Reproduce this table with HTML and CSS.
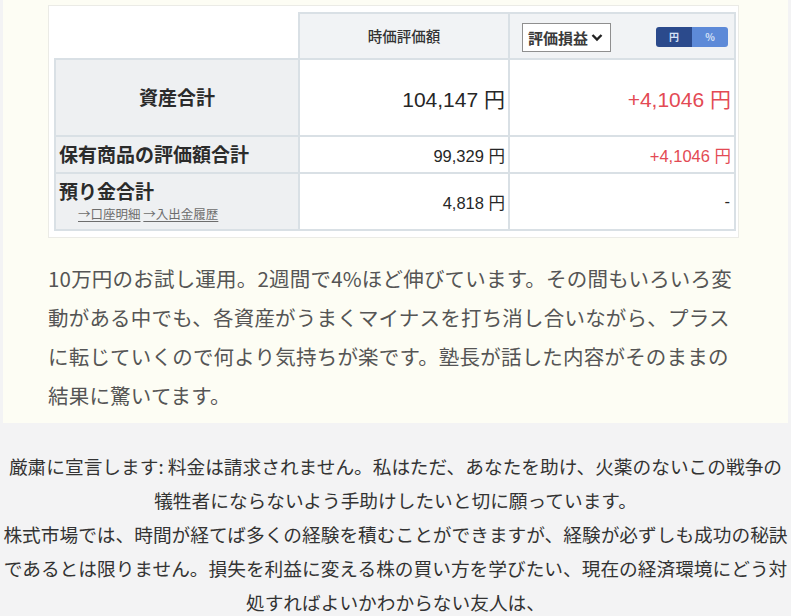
FILE: index.html
```html
<!DOCTYPE html>
<html lang="ja">
<head>
<meta charset="utf-8">
<title>資産合計</title>
<link rel="stylesheet" href="styles.css">
</head>
<body>
<div class="card">
  <div class="shot">
    <table class="assets">
      <colgroup><col class="c1"><col class="c2"><col class="c3"></colgroup>
      <tr class="r-head">
        <th class="blank"></th>
        <th class="head">時価評価額</th>
        <th class="head head-ctl">
          <div class="ctl">
            <div class="sel">評価損益<svg class="chev" width="12" height="9" viewBox="0 0 12 9"><path d="M1.5 2 L6 6.5 L10.5 2" fill="none" stroke="#222" stroke-width="2.4"/></svg></div>
            <div class="toggle"><span class="t-on">円</span><span class="t-off">%</span></div>
          </div>
        </th>
      </tr>
      <tr class="r-total">
        <th class="label label-c">資産合計</th>
        <td class="num big">104,147 円</td>
        <td class="num big red">+4,1046 円</td>
      </tr>
      <tr class="r-hold">
        <th class="label">保有商品の評価額合計</th>
        <td class="num">99,329 円</td>
        <td class="num red">+4,1046 円</td>
      </tr>
      <tr class="r-cash">
        <th class="label">
          <div class="cash-title">預り金合計</div>
          <div class="links"><a>→口座明細</a> <a>→入出金履歴</a></div>
        </th>
        <td class="num">4,818 円</td>
        <td class="num dash">-</td>
      </tr>
    </table>
  </div>
  <p class="note">10万円のお試し運用。2週間で4%ほど伸びています。その間もいろいろ変<br>動がある中でも、各資産がうまくマイナスを打ち消し合いながら、プラス<br>に転じていくので何より気持ちが楽です。塾長が話した内容がそのままの<br>結果に驚いてます。</p>
</div>
<div class="body-text">
  <p>厳粛に宣言します: 料金は請求されません。私はただ、あなたを助け、火薬のないこの戦争の<br>犠牲者にならないよう手助けしたいと切に願っています。</p>
  <p>株式市場では、時間が経てば多くの経験を積むことができますが、経験が必ずしも成功の秘訣<br>であるとは限りません。損失を利益に変える株の買い方を学びたい、現在の経済環境にどう対<br>処すればよいかわからない友人は、</p>
</div>
</body>
</html>
```
FILE: styles.css
```css
html, body {
  margin: 0;
  padding: 0;
}
body {
  background: #f3f3f4;
  font-family: "Noto Sans CJK JP", sans-serif;
  width: 791px;
  overflow: hidden;
}
.card {
  margin: 0 3px;
  background: #fdfdf4;
  padding: 5px 40px 8px 45px;
}
.shot {
  width: 691px;
  box-sizing: border-box;
  background: #fff;
  border: 1px solid #ebebe6;
  padding: 6px 6px 6px 5px;
}
.assets {
  width: 680px;
  table-layout: fixed;
  border-collapse: collapse;
  font-family: "Liberation Sans", "Noto Sans CJK JP", sans-serif;
  color: #262626;
}
.c1 { width: 244px; }
.c2 { width: 210px; }
.c3 { width: 226px; }
.assets th, .assets td {
  border: 2px solid #d9e0e5;
  padding: 0;
}
.assets th.blank {
  border-top: none;
  border-left: none;
  background: #fff;
}
.r-head { height: 46px; }
.r-total { height: 77px; }
.r-hold { height: 37px; }
.r-cash { height: 57px; }
.assets .head {
  background: #f1f3f5;
  font-weight: 500;
  font-size: 14.5px;
  color: #333;
  font-family: "Noto Sans CJK JP", sans-serif;
  padding-bottom: 2px;
}
.assets .head-ctl { padding: 0 6px 0 12px; }
.ctl {
  display: flex;
  align-items: center;
  justify-content: space-between;
}
.sel {
  display: flex;
  align-items: center;
  gap: 3px;
  box-sizing: border-box;
  height: 29px;
  width: 89px;
  padding: 0 4px 0 5px;
  border: 1px solid #8f8f8f;
  background: #fff;
  font-family: "Noto Sans CJK JP", sans-serif;
  font-weight: 700;
  font-size: 15px;
  color: #3a3a3a;
  margin-top: 2px;
}
.chev { flex: none; margin-top: 1px; }
.toggle {
  display: flex;
  height: 20px;
  width: 72px;
  border-radius: 3px;
  overflow: hidden;
  font-size: 10px;
  font-weight: 700;
  line-height: 20px;
  margin-top: 2px;
}
.toggle span {
  flex: 1;
  text-align: center;
  color: #d6e2f7;
}
.t-on { background: #2b4a8c; }
.t-off { background: #5d8ad8; }
.assets .label {
  background: #eef0f2;
  text-align: left;
  padding-left: 3px;
  font-family: "Noto Sans CJK JP", sans-serif;
  font-weight: 700;
  font-size: 19px;
  color: #2b2b2b;
  line-height: 1.2;
}
.assets .label-c {
  text-align: center;
  padding-left: 0;
}
.cash-title { margin-top: -2px; }
.links {
  font-size: 12.5px;
  font-weight: 400;
  padding-left: 19px;
  margin-top: 4px;
  line-height: 1.2;
}
.links a {
  color: #6d6d6d;
  text-decoration: underline;
  text-underline-offset: 2px;
}
.assets .num {
  text-align: right;
  padding-right: 3px;
  font-size: 16.5px;
  background: #fff;
}
.assets .big { font-size: 21px; }
.red { color: #e34a54; }
.assets .dash { padding-right: 4px; }
.note {
  margin: 21px 0 0 0;
  font-size: 20.5px;
  line-height: 39px;
  color: #555;
  letter-spacing: 0.2px;
  white-space: nowrap;
}
.body-text {
  padding-top: 26px;
  text-align: center;
  color: #333;
  font-size: 18.7px;
  line-height: 34px;
}
.body-text p {
  margin: 0;
  white-space: nowrap;
}
```
